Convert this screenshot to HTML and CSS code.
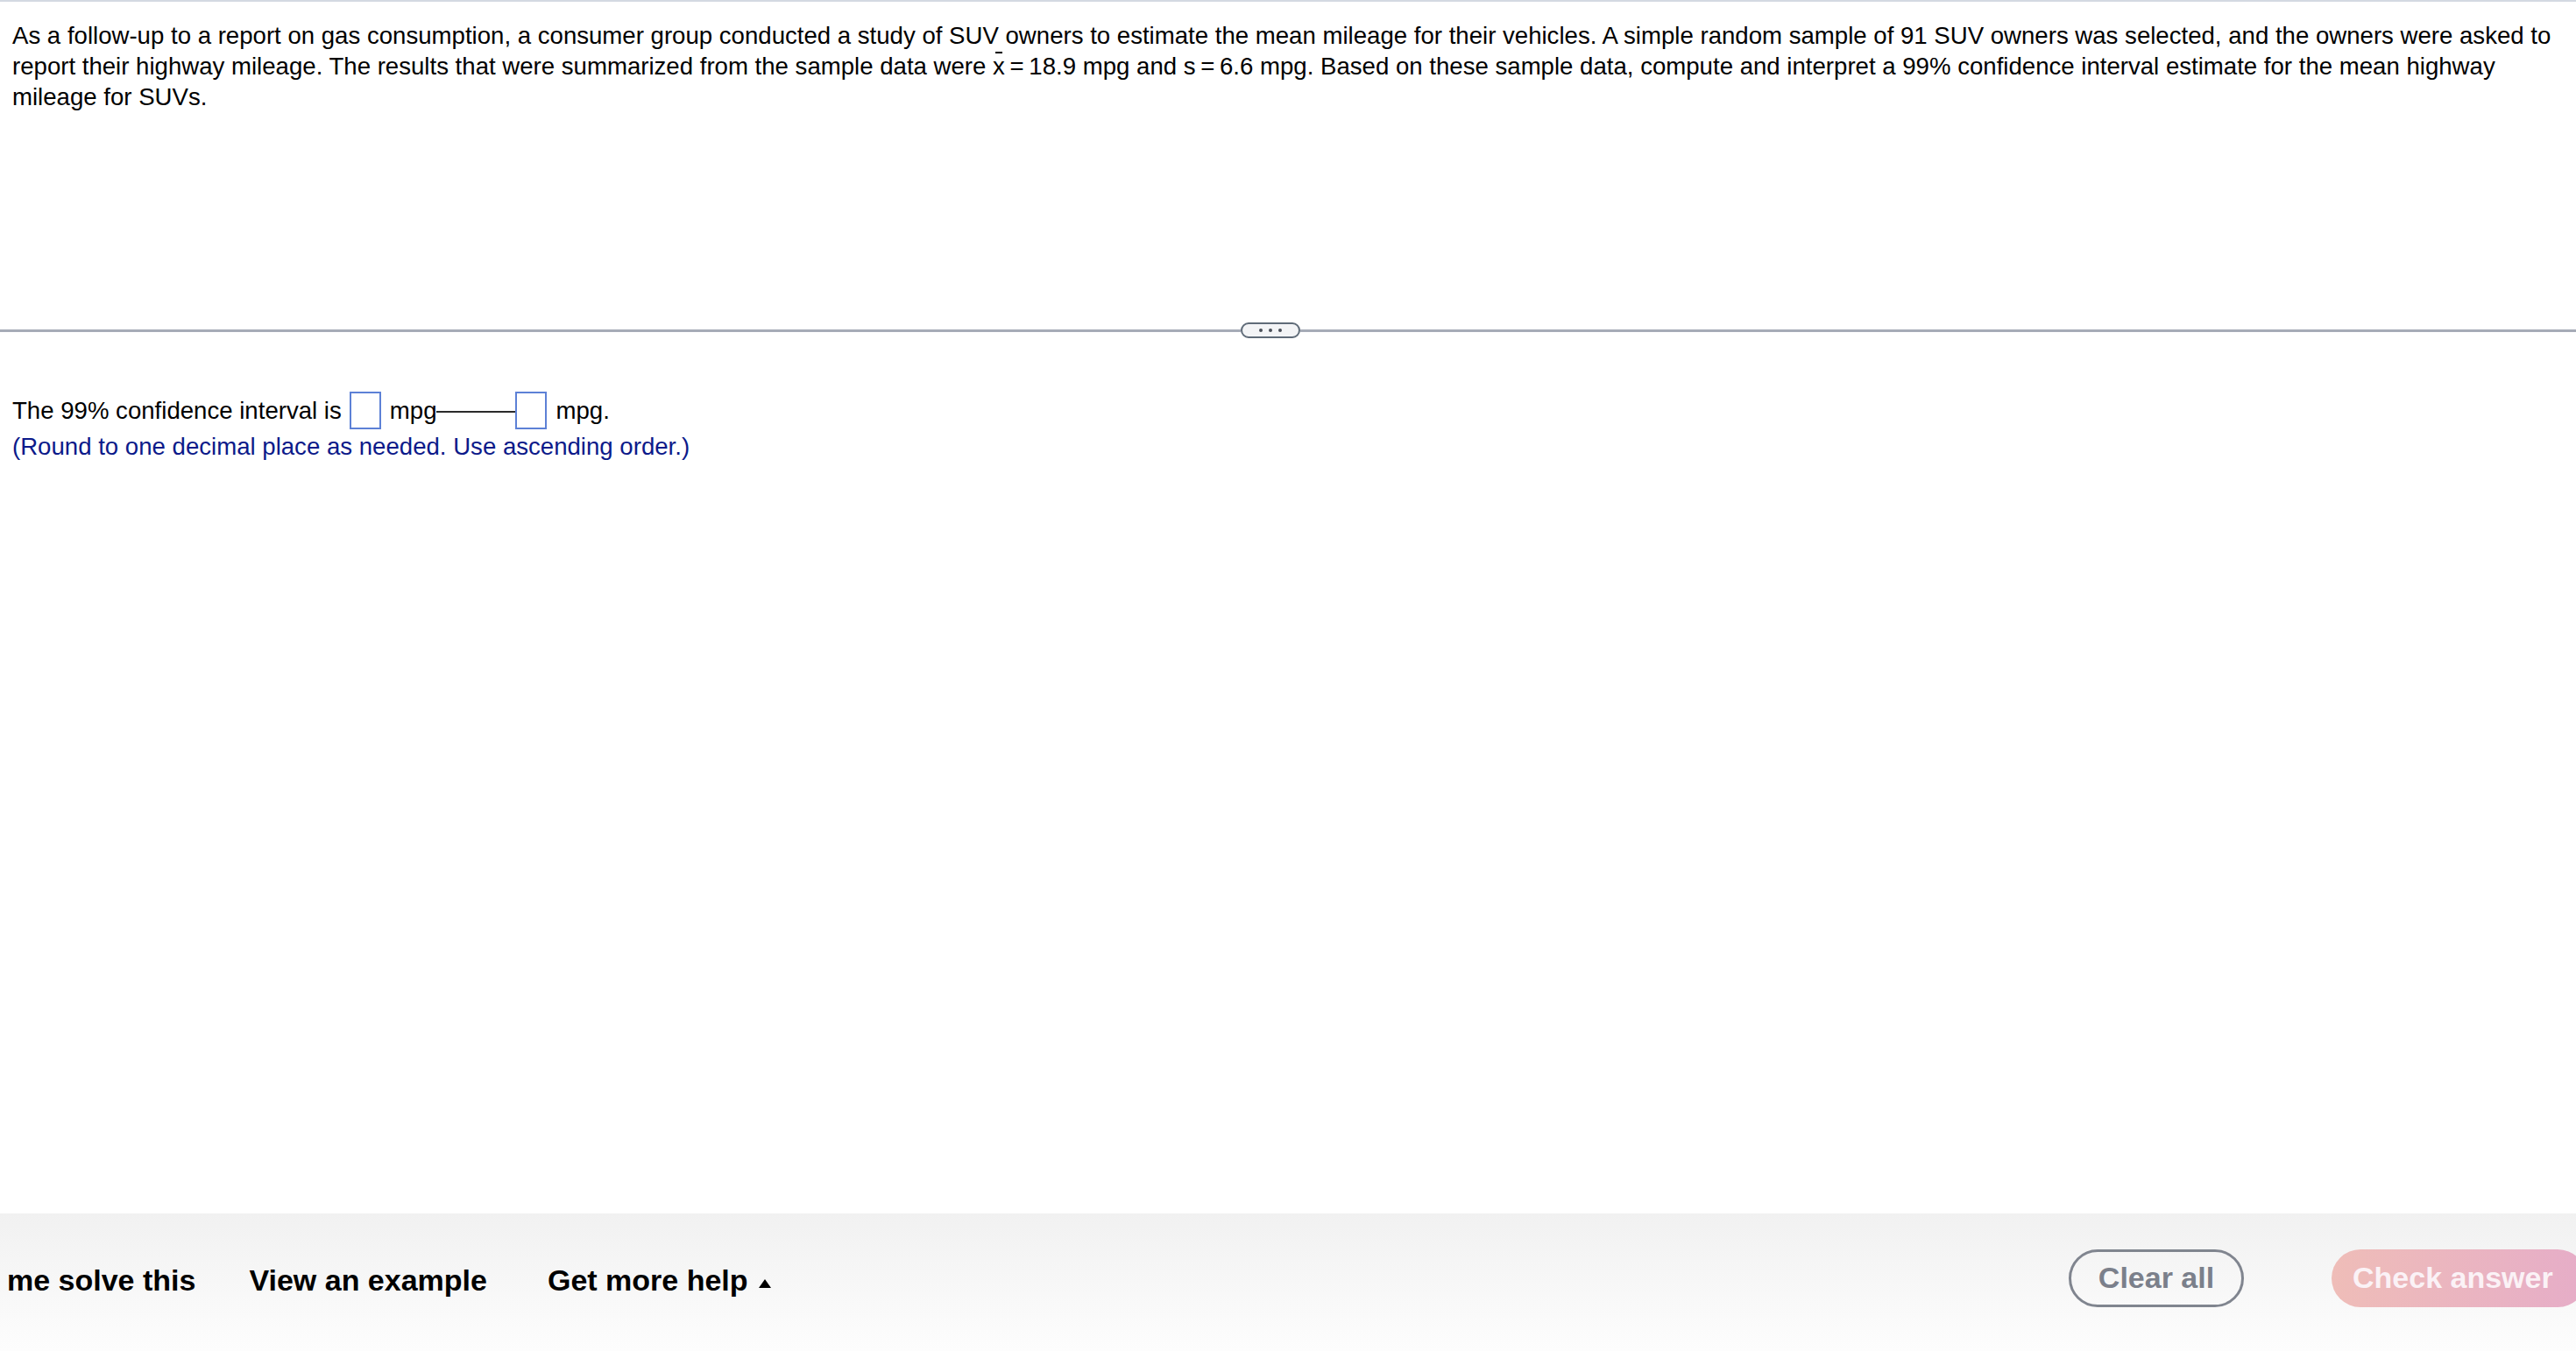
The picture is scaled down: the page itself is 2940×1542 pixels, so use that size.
FILE: index.html
```html
<!DOCTYPE html>
<html lang="en">
<head>
<meta charset="utf-8">
<title>Confidence interval question</title>
<link rel="stylesheet" href="styles.css">
</head>
<body>
<div class="page">
  <main class="main">
    <section class="question">
      <p class="question-text">As a follow-up to a report on gas consumption, a consumer group conducted a study of SUV owners to estimate the mean mileage for their vehicles. A simple random sample of 91 SUV owners was selected, and the owners were asked to report their highway mileage. The results that were summarized from the sample data were <span class="xbar">x</span><span class="eq"> = </span>18.9 mpg and s<span class="eq"> = </span>6.6 mpg. Based on these sample data, compute and interpret a 99% confidence interval estimate for the mean highway mileage for SUVs.</p>
    </section>
    <div class="divider">
      <span class="divider-line divider-left"></span>
      <span class="divider-pill"><i></i><i></i><i></i></span>
      <span class="divider-line"></span>
    </div>
    <section class="answer">
      <div class="answer-row">
        <span class="txt">The 99% confidence interval is</span>
        <span class="box box-first"></span>
        <span class="txt unit">mpg</span>
        <span class="dash"></span>
        <span class="box"></span>
        <span class="txt unit">mpg.</span>
      </div>
      <p class="hint">(Round to one decimal place as needed. Use ascending order.)</p>
    </section>
  </main>
  <footer class="footer">
    <div class="help-links">
      <span class="link link-first">me solve this</span>
      <span class="link link-example">View an example</span>
      <span class="link link-more">Get more help <span class="tri"></span></span>
    </div>
    <div class="actions">
      <button class="btn btn-clear">Clear all</button>
      <button class="btn btn-check">Check answer</button>
    </div>
  </footer>
</div>
</body>
</html>
```

FILE: styles.css
```css
html, body {
  margin: 0;
  padding: 0;
  background: #ffffff;
}

body {
  font-family: "Liberation Sans", Arial, Helvetica, sans-serif;
  color: #000000;
  overflow: hidden;
}

.page {
  display: flex;
  flex-direction: column;
  min-height: 100vh;
  height: 100vh;
}

.main {
  flex: 1;
  display: flex;
  flex-direction: column;
}

.question {
  box-sizing: border-box;
  height: 368px;
  border-top: 2px solid #d3d9e2;
  padding: 21px 14px 0 14px;
}

.question-text {
  margin: 0;
  font-size: 27.6px;
  line-height: 35px;
}

.eq {
  word-spacing: -2px;
}

.xbar {
  position: relative;
  display: inline-block;
}

.xbar::before {
  content: "";
  position: absolute;
  left: 3px;
  right: 3px;
  top: 1px;
  height: 2px;
  background: #000;
}

.divider {
  display: flex;
  align-items: center;
  height: 18px;
}

.divider-line {
  flex: 1;
  height: 3px;
  background: #a6abb7;
}

.divider-left {
  flex: none;
  width: 1416px;
}

.divider-pill {
  box-sizing: border-box;
  flex: none;
  width: 68px;
  height: 18px;
  border: 2px solid #5f6b78;
  border-radius: 9px;
  background: #f3f4f6;
  display: flex;
  align-items: center;
  justify-content: center;
  gap: 7px;
}

.divider-pill i {
  width: 4px;
  height: 4px;
  border-radius: 50%;
  background: #4a4f58;
}

.answer {
  padding: 64px 14px 0 14px;
  font-size: 27.6px;
}

.answer-row {
  display: flex;
  align-items: center;
  height: 36px;
  line-height: 35px;
  white-space: nowrap;
}

.box {
  box-sizing: border-box;
  flex: none;
  width: 36px;
  height: 43px;
  border: 2px solid #5d81d6;
  background: #ffffff;
}

.box-first {
  margin-left: 9px;
}

.unit {
  margin-left: 10px;
}

.dash {
  flex: none;
  width: 90px;
  height: 2px;
  background: #2a2a2a;
  margin-top: 3px;
}

.hint {
  margin: 6px 0 0 0;
  line-height: 35px;
  color: #0c1a8a;
}

.footer {
  flex: none;
  height: 157px;
  display: flex;
  align-items: center;
  justify-content: space-between;
  background: linear-gradient(#f1f1f1, #fdfdfd);
  overflow: hidden;
}

.help-links {
  display: flex;
  align-items: center;
  padding-left: 8px;
  padding-bottom: 4px;
}

.link {
  font-size: 34px;
  font-weight: bold;
  color: #000;
  white-space: nowrap;
}

.link-example {
  margin-left: 61px;
}

.link-more {
  margin-left: 69px;
  display: flex;
  align-items: center;
}

.tri {
  display: inline-block;
  width: 0;
  height: 0;
  margin-left: 12px;
  margin-top: 6px;
  border-left: 7px solid transparent;
  border-right: 7px solid transparent;
  border-bottom: 10px solid #000;
}

.actions {
  display: flex;
  align-items: center;
  margin-right: -12px;
  padding-bottom: 10px;
}

.btn {
  font-family: "Liberation Sans", Arial, Helvetica, sans-serif;
  font-size: 34px;
  font-weight: bold;
  height: 66px;
  border-radius: 33px;
  box-sizing: border-box;
  cursor: pointer;
  white-space: nowrap;
}

.btn-clear {
  width: 200px;
  background: transparent;
  border: 3px solid #80858f;
  color: #7b808b;
  padding: 0;
}

.btn-check {
  width: 291px;
  margin-left: 100px;
  border: none;
  background: linear-gradient(90deg, #efbdb8, #e6adc8);
  color: #fbf2f6;
  text-align: left;
  padding-left: 24px;
}
```
